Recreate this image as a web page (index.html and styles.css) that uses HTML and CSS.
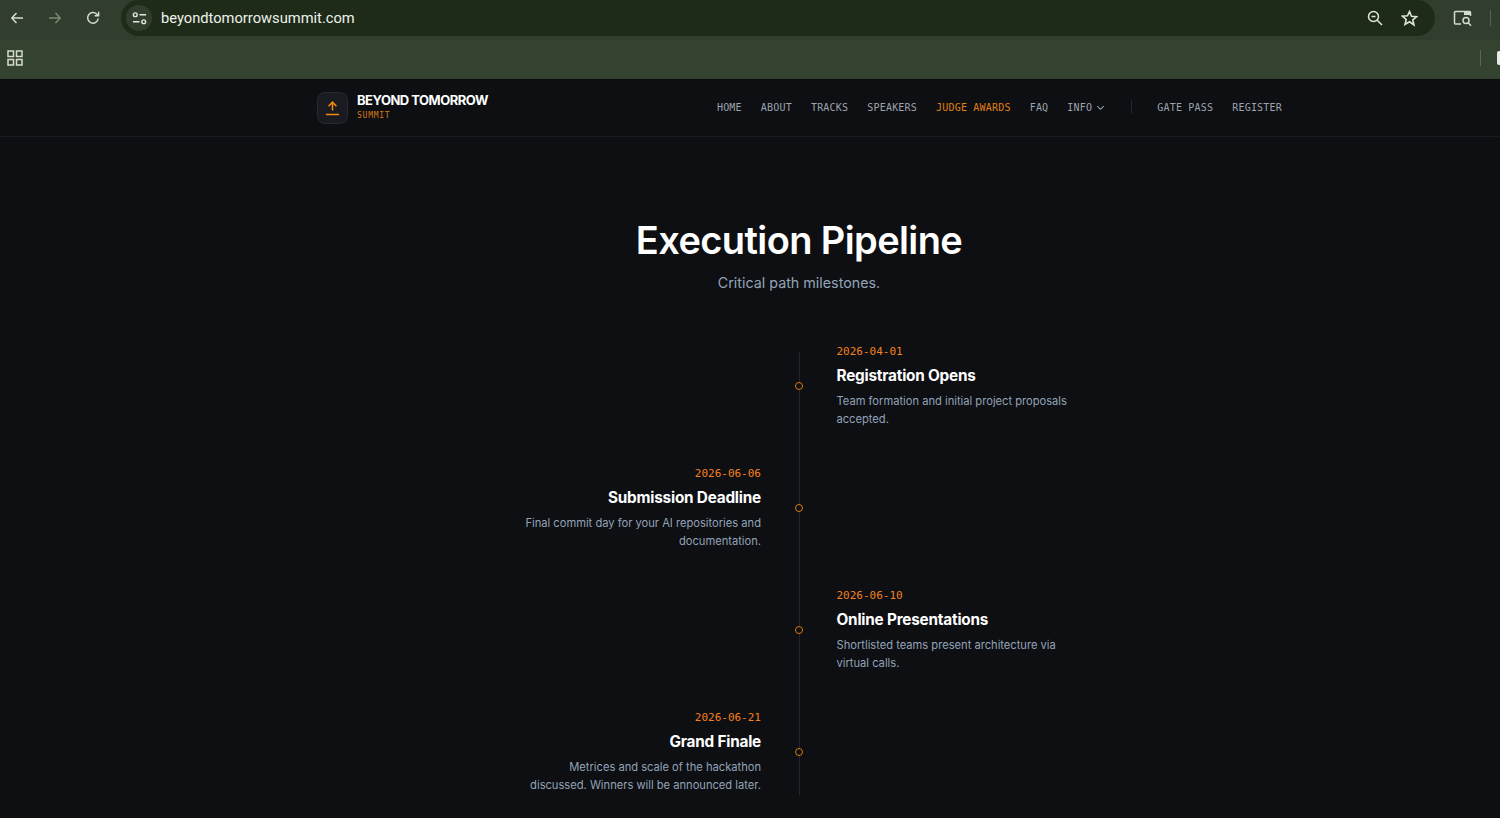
FILE: index.html
```html
<!DOCTYPE html>
<html lang="en">
<head>
    <meta charset="UTF-8">
    <title>Beyond Tomorrow Summit</title>
    <link rel="stylesheet" href="styles.css">
</head>
<body>

    <!-- Browser chrome -->
    <div class="toolbar">
        <svg class="tool-icon tool-back" viewBox="0 0 16 16"><path d="M14 8H3M7.5 3 2.8 8l4.7 5"/></svg>
        <svg class="tool-icon tool-forward" viewBox="0 0 16 16"><path d="M2 8h11M8.5 3l4.7 5-4.7 5"/></svg>
        <svg class="tool-icon tool-reload" viewBox="0 0 16 16"><path d="M13.2 8.5A5.3 5.3 0 1 1 11.6 4L13.4 5.6M13.6 1.8v4h-4"/></svg>
        <div class="omnibox">
            <span class="site-info">
                <svg class="info-icon" viewBox="0 0 16 16"><circle cx="3.5" cy="4" r="2"/><path d="M8 4h7M1 11.5h7"/><circle cx="12.5" cy="11.5" r="2"/></svg>
            </span>
            <span class="url">beyondtomorrowsummit.com</span>
            <svg class="omni-icon omni-zoom" viewBox="0 0 16 16"><circle cx="6.5" cy="6.5" r="5"/><path d="M4.5 6.5h4M10.2 10.2 15 15"/></svg>
            <svg class="omni-icon omni-star" viewBox="0 0 16 16"><path d="m8 1.5 1.9 4.4 4.8.4-3.6 3.1 1.1 4.7L8 11.1l-4.2 2.5 1.1-4.7-3.6-3.1 4.8-.4z"/></svg>
        </div>
        <svg class="tool-icon tool-lens" viewBox="0 0 20 18">
            <path d="M8 14H2.5a1 1 0 0 1-1-1V2.5a1 1 0 0 1 1-1h14a1 1 0 0 1 1 1V6"/>
            <path class="lens-tab" d="M11 1.5h6.5V5H11z"/>
            <circle cx="13" cy="10.5" r="3"/><path d="m15.2 12.8 2.8 3"/>
        </svg>
        <span class="tool-divider"></span>
    </div>
    <div class="bookmarks">
        <svg class="apps-icon" viewBox="0 0 16 16">
            <rect x="1" y="1" width="5.5" height="5.5"/><rect x="9.5" y="1" width="5.5" height="5.5"/>
            <rect x="1" y="9.5" width="5.5" height="5.5"/><rect x="9.5" y="9.5" width="5.5" height="5.5"/>
        </svg>
        <span class="bookmark-divider"></span>
        <span class="bookmark-tab"></span>
    </div>

    <div class="site">
        <header class="site-header">
            <div class="header-inner">
                <a class="brand" href="#">
                    <span class="brand-mark">
                        <svg viewBox="0 0 16 18"><path d="M8 11V2.5M3.8 6.5 8 2.2l4.2 4.3M1 15.5h14"/></svg>
                    </span>
                    <span class="brand-text">
                        <span class="brand-name">BEYOND TOMORROW</span>
                        <span class="brand-sub">SUMMIT</span>
                    </span>
                </a>
                <nav class="main-nav">
                    <a href="#">HOME</a>
                    <a href="#">ABOUT</a>
                    <a href="#">TRACKS</a>
                    <a href="#">SPEAKERS</a>
                    <a href="#" class="active">JUDGE AWARDS</a>
                    <a href="#">FAQ</a>
                    <a href="#" class="has-caret">INFO
                        <svg viewBox="0 0 10 10"><path d="M1.5 3.5 5 7l3.5-3.5"/></svg>
                    </a>
                    <span class="nav-divider"></span>
                    <a href="#">GATE PASS</a>
                    <a href="#">REGISTER</a>
                </nav>
            </div>
        </header>

        <main class="pipeline">
            <h1 class="pipeline-title">Execution Pipeline</h1>
            <p class="pipeline-sub">Critical path milestones.</p>

            <div class="timeline">
                <div class="milestone right">
                    <span class="dot"></span>
                    <div class="date">2026-04-01</div>
                    <h3>Registration Opens</h3>
                    <p>Team formation and initial project proposals accepted.</p>
                </div>
                <div class="milestone left">
                    <span class="dot"></span>
                    <div class="date">2026-06-06</div>
                    <h3>Submission Deadline</h3>
                    <p>Final commit day for your AI repositories and documentation.</p>
                </div>
                <div class="milestone right">
                    <span class="dot"></span>
                    <div class="date">2026-06-10</div>
                    <h3>Online Presentations</h3>
                    <p>Shortlisted teams present architecture via virtual calls.</p>
                </div>
                <div class="milestone left">
                    <span class="dot"></span>
                    <div class="date">2026-06-21</div>
                    <h3>Grand Finale</h3>
                    <p>Metrices and scale of the hackathon discussed. Winners will be announced later.</p>
                </div>
            </div>
        </main>
    </div>

</body>
</html>
```

FILE: styles.css
```css
/* Reset */
* {
    margin: 0;
    padding: 0;
    box-sizing: border-box;
}

html, body {
    height: 100%;
    overflow: hidden;
}

body {
    font-family: Inter, "Liberation Sans", sans-serif;
    background-color: #0d0f12;
    color: #fff;
}

a {
    color: inherit;
    text-decoration: none;
}

/* Browser chrome */
.toolbar {
    height: 40px;
    display: flex;
    align-items: flex-start;
    background-color: #323e2d;
    position: relative;
}

.tool-icon, .omni-icon, .apps-icon, .info-icon {
    fill: none;
    stroke-width: 1.5;
}

.tool-icon {
    width: 16px;
    height: 16px;
    stroke: #d5dccf;
    margin-top: 10px;
    flex-shrink: 0;
}

.tool-back {
    margin-left: 9px;
}

.tool-forward {
    margin-left: 22px;
    stroke: #7c8876;
}

.tool-reload {
    margin-left: 22px;
}

.omnibox {
    width: 1314px;
    height: 36px;
    margin-left: 20px;
    border-radius: 18px;
    background-color: #1f2b19;
    display: flex;
    align-items: center;
    padding: 0 17px 0 5px;
}

.site-info {
    width: 26px;
    height: 26px;
    border-radius: 50%;
    background-color: #323e2d;
    display: flex;
    align-items: center;
    justify-content: center;
}

.info-icon {
    width: 15px;
    height: 15px;
    stroke: #e3e8df;
}

.url {
    margin-left: 9px;
    font-family: Roboto, "Liberation Sans", sans-serif;
    font-size: 14.7px;
    color: #eef1ec;
}

.omni-icon {
    width: 16px;
    height: 16px;
    stroke: #dfe5da;
}

.omni-zoom {
    margin-left: auto;
}

.omni-star {
    margin-left: 18px;
    width: 17px;
    height: 17px;
}

.tool-lens {
    width: 20px;
    height: 18px;
    margin-left: 18px;
    margin-top: 10px;
}

.lens-tab {
    fill: #d5dccf;
    stroke: none;
}

.tool-divider {
    width: 1px;
    height: 16px;
    margin: 10px 0 0 17px;
    background-color: #59654f;
}

.bookmarks {
    height: 40px;
    display: flex;
    align-items: center;
    background-color: #344230;
    border-bottom: 1px solid #0a0b0a;
    padding-bottom: 4px;
}

.apps-icon {
    width: 16px;
    height: 16px;
    margin-left: 7px;
    stroke: #d5dccf;
}

.bookmark-divider {
    width: 1px;
    height: 16px;
    margin-left: auto;
    background-color: #59654f;
}

.bookmark-tab {
    width: 3px;
    height: 14px;
    margin-left: 16px;
    border-radius: 2px 0 0 2px;
    background-color: #e8ebe5;
}

/* Site header */
.site-header {
    height: 57px;
    border-bottom: 1px solid #171a1e;
}

.header-inner {
    width: 966px;
    height: 100%;
    margin-left: 316px;
    display: flex;
    align-items: center;
    justify-content: space-between;
}

.brand {
    display: flex;
    align-items: center;
    gap: 9px;
}

.brand-mark {
    width: 31px;
    height: 32px;
    margin-left: 1px;
    border-radius: 8px;
    background-color: #191b20;
    border: 1px solid #272a30;
    display: flex;
    align-items: center;
    justify-content: center;
}

.brand-mark svg {
    width: 15px;
    height: 17px;
    fill: none;
    stroke: #f58a0f;
    stroke-width: 1.6;
}

.brand-text {
    display: flex;
    flex-direction: column;
    gap: 3px;
    margin-top: -3px;
}

.brand-name {
    font-size: 13px;
    font-weight: 700;
    letter-spacing: -0.5px;
    line-height: 15px;
}

.brand-sub {
    font-family: "DejaVu Sans Mono", monospace;
    font-size: 8px;
    line-height: 10px;
    letter-spacing: 0.75px;
    color: #d97a12;
}

.main-nav {
    display: flex;
    align-items: center;
    gap: 19px;
    margin-bottom: 2px;
    font-family: "DejaVu Sans Mono", monospace;
    font-size: 10px;
    letter-spacing: 0.2px;
    color: #9ca3af;
}

.main-nav .active {
    color: #e07f14;
}

.has-caret {
    display: flex;
    align-items: center;
    gap: 4px;
}

.has-caret svg {
    width: 9px;
    height: 9px;
    fill: none;
    stroke: #9ca3af;
    stroke-width: 1.2;
}

.nav-divider {
    width: 1px;
    height: 14px;
    margin: 0 6px 0 7px;
    background-color: #24272c;
}

/* Timeline section */
.pipeline {
    width: 966px;
    margin-left: 316px;
    padding-top: 80px;
    text-align: center;
}

.pipeline-title {
    font-size: 38px;
    font-weight: 600;
    line-height: 46px;
    letter-spacing: -0.6px;
}

.pipeline-sub {
    margin-top: 8px;
    font-size: 14.3px;
    line-height: 24px;
    color: #94a3b8;
}

.timeline {
    position: relative;
    width: 1px;
    margin: 57px auto 0;
    background-color: #23262b;
    height: 443px;
    text-align: left;
}

.milestone {
    position: absolute;
    width: 244px;
}

.milestone:nth-child(1) { top: -8px; }
.milestone:nth-child(2) { top: 114px; }
.milestone:nth-child(3) { top: 236px; }
.milestone:nth-child(4) { top: 358px; }

.milestone.right {
    left: 38px;
}

.milestone.left {
    right: 38.5px;
    text-align: right;
}

.dot {
    position: absolute;
    top: 38px;
    width: 8px;
    height: 8px;
    border-radius: 50%;
    background-color: #0d0f12;
    border: 1.5px solid #d97a12;
}

.right .dot {
    left: -41.5px;
}

.left .dot {
    right: -42px;
}

.date {
    font-family: "DejaVu Sans Mono", monospace;
    font-size: 11px;
    line-height: 16px;
    color: #f5801e;
}

.milestone h3 {
    margin-top: 5px;
    font-size: 15.3px;
    font-weight: 700;
    line-height: 22px;
    letter-spacing: -0.2px;
}

.milestone p {
    margin-top: 4.5px;
    font-size: 11.15px;
    line-height: 18.4px;
    color: #94a3b8;
}
```
